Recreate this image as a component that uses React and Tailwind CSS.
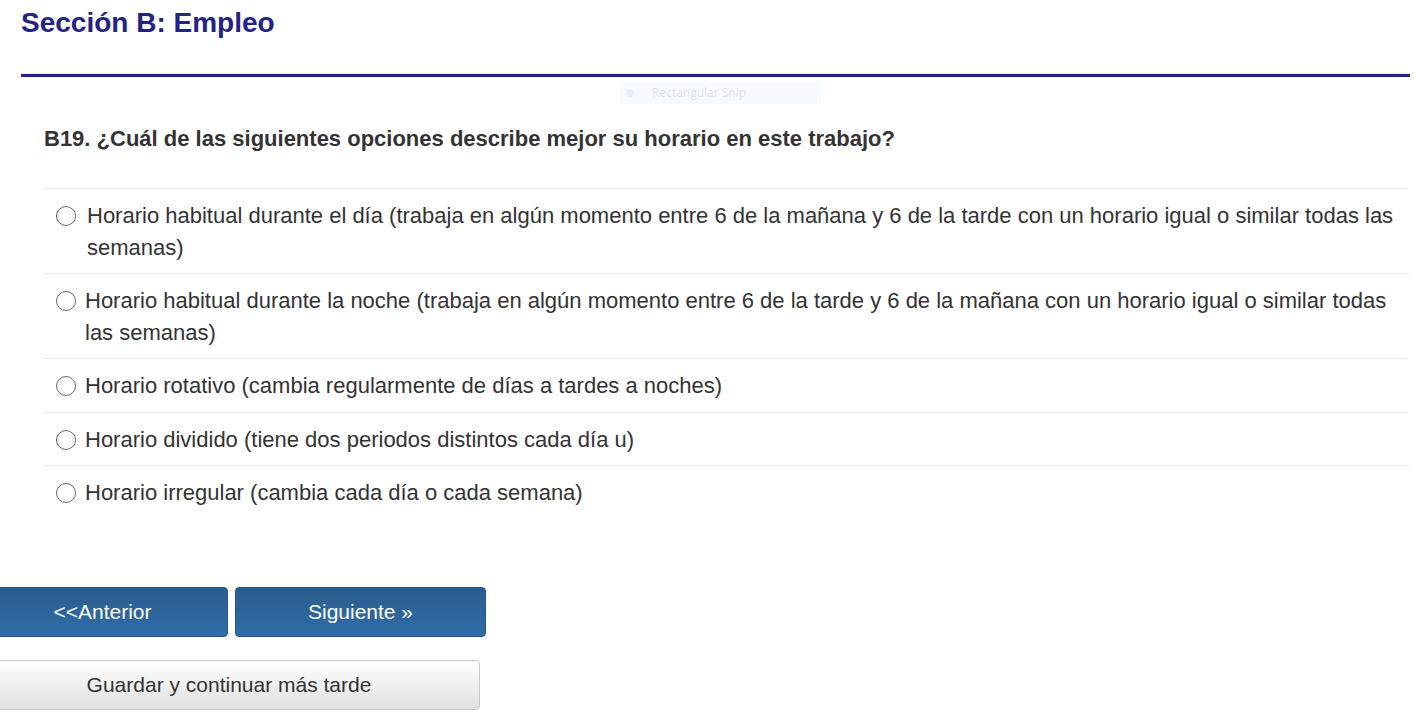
export default function App() {
  const options = [
    "Horario habitual durante el día (trabaja en algún momento entre 6 de la mañana y 6 de la tarde con un horario igual o similar todas las semanas)",
    "Horario habitual durante la noche (trabaja en algún momento entre 6 de la tarde y 6 de la mañana con un horario igual o similar todas las semanas)",
    "Horario rotativo (cambia regularmente de días a tardes a noches)",
    "Horario dividido (tiene dos periodos distintos cada día u)",
    "Horario irregular (cambia cada día o cada semana)",
  ];
  return (
    <div className="w-[1417px] h-[715px] overflow-hidden bg-white font-['Liberation_Sans',Arial,sans-serif] text-[#333]">
      <div className="pl-[21px] pr-[7px]">
        <h1 className="pt-[5px] h-[73px] text-[28px] leading-[36px] font-bold text-[#232385]">Sección B: Empleo</h1>
        <div className="h-[2px] bg-[#e8e8e8]" />
        <div className="h-[3px] bg-[#232385] -mt-[1px]" />
        <div className="relative h-[27px]">
          <div className="absolute left-[599px] top-[5px] w-[201px] h-[22px] bg-[#f6faff] flex items-center text-[12px] text-[#dde3ea] font-['Open_Sans',sans-serif]">
            <span className="ml-[6px] w-[8px] h-[8px] rounded-full bg-[#e8eef5]" />
            <span className="ml-[18px]">Rectangular Snip</span>
          </div>
        </div>
        <div className="pl-[23px] pt-[22px] h-[84px] text-[22px] leading-[26px] font-bold">
          B19. ¿Cuál de las siguientes opciones describe mejor su horario en este trabajo?
        </div>
        <div className="ml-[21px] mr-[1px]">
          {options.map((o, i) => (
            <div
              key={i}
              className="flex items-start pt-[11px] pb-[10px] pr-[14px] text-[22px] leading-[31.5px] rounded-[4px] border-t border-[#e9e9e9]"
            >
              <span className="shrink-0 mt-[6px] ml-[14px] w-[20px] h-[20px] rounded-full border-[1.5px] border-[#666] bg-white" />
              <span className={i === 0 ? "ml-[11px]" : "ml-[9px]"}>{o}</span>
            </div>
          ))}
        </div>
      </div>
      <div className="mt-[68px] flex gap-[7px] -ml-[23px]">
        <button className="w-[251px] h-[50px] rounded-[4px] border border-[#245580] bg-gradient-to-b from-[#2b5c8e] to-[#306da8] text-white text-[21px]">&lt;&lt;Anterior</button>
        <button className="w-[251px] h-[50px] rounded-[4px] border border-[#245580] bg-gradient-to-b from-[#2b5c8e] to-[#306da8] text-white text-[21px]">Siguiente »</button>
      </div>
      <div className="mt-[23px] -ml-[22px]">
        <button className="w-[502px] h-[50px] rounded-[4px] border border-[#c8c8c8] bg-gradient-to-b from-white to-[#e0e0e0] text-[#333] text-[21px]">Guardar y continuar más tarde</button>
      </div>
    </div>
  );
}
